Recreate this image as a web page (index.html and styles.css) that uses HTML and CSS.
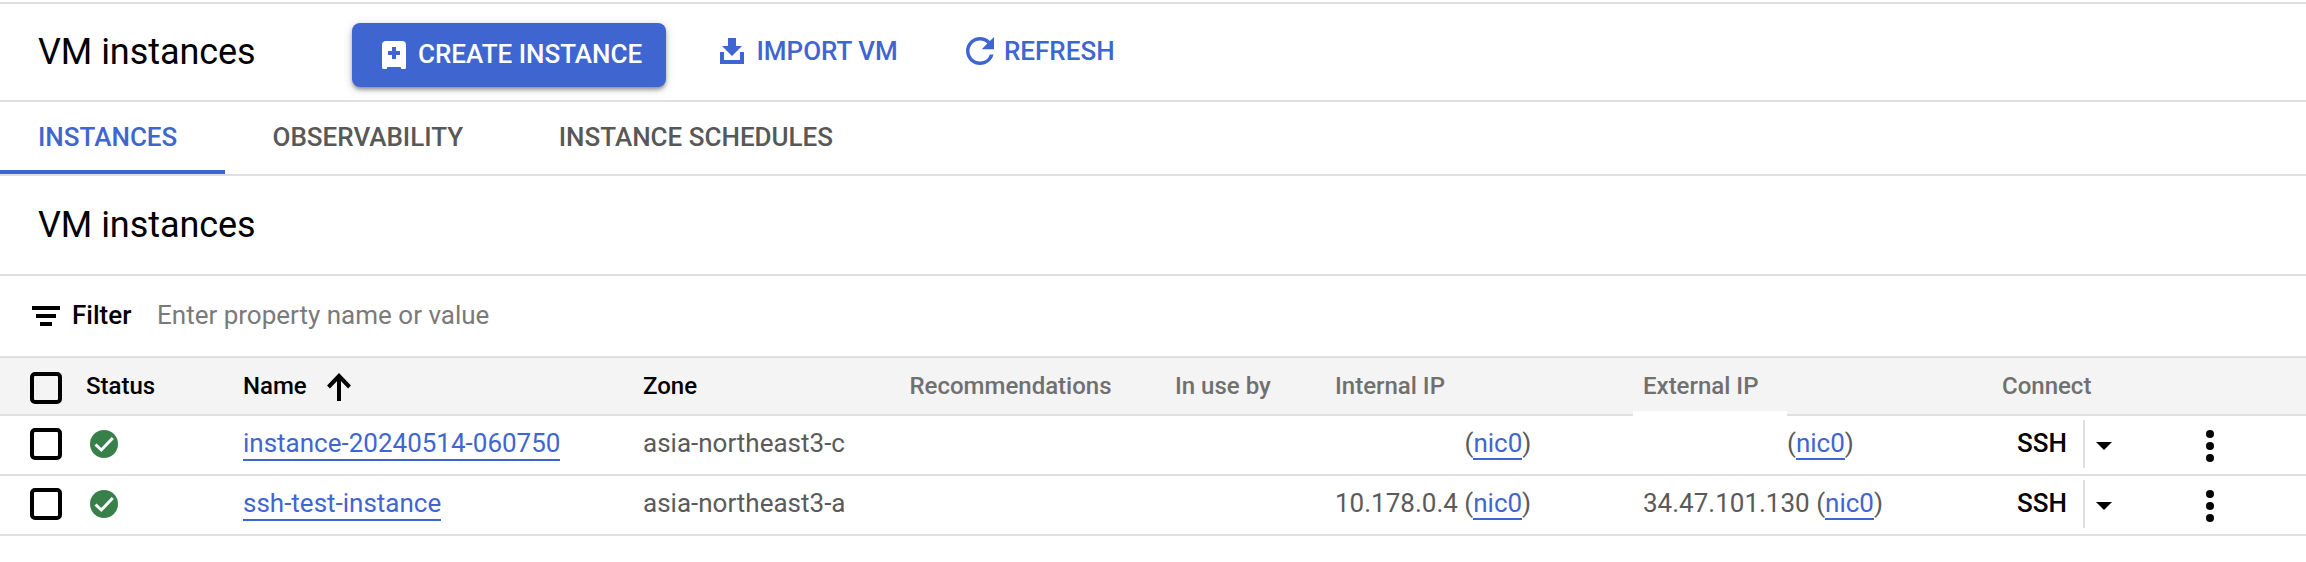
FILE: index.html
```html
<!DOCTYPE html>
<html lang="en">
<head>
<meta charset="utf-8">
<title>VM instances</title>
<link rel="stylesheet" href="styles.css">
</head>
<body>
<header class="toolbar">
  <h1 class="title">VM instances</h1>
  <button class="btn primary">
    <svg width="24" height="28" viewBox="0 0 24 28"><path fill="#fff" fill-rule="evenodd" d="M4 0h16a4 4 0 0 1 4 4v22.500a1.500 1.500 0 0 1-1.500 1.500h-2.200a1.500 1.500 0 0 1-1.500-1.500V26H5.200v.5A1.500 1.500 0 0 1 3.700 28H1.500A1.500 1.500 0 0 1 0 26.500V4a4 4 0 0 1 4-4zM10 6v4H6v4h4v4h4v-4h4v-4h-4V6z"/></svg>
    <span>CREATE INSTANCE</span>
  </button>
  <button class="btn import">
    <svg width="24" height="26" viewBox="0 0 24 26"><path fill="#3f66d0" d="M8 0h8v8h6L12 18 2 8h6zM0 14h4v8h16v-8h4v12H0z"/></svg>
    <span>IMPORT VM</span>
  </button>
  <button class="btn refresh">
    <svg width="28" height="28" viewBox="4 4 16 16"><path fill="#3f66d0" d="M17.650 6.350A7.958 7.958 0 0 0 12 4c-4.420 0-7.990 3.580-7.990 8s3.570 8 7.990 8c3.730 0 6.840-2.550 7.730-6h-2.080A5.990 5.990 0 0 1 12 18c-3.310 0-6-2.690-6-6s2.690-6 6-6c1.660 0 3.140.69 4.220 1.780L13 11h7V4z"/></svg>
    <span>REFRESH</span>
  </button>
</header>
<nav class="tabs">
  <a class="tab active"><span>INSTANCES</span></a>
  <a class="tab"><span>OBSERVABILITY</span></a>
  <a class="tab"><span>INSTANCE SCHEDULES</span></a>
</nav>
<section class="heading"><h2 class="title">VM instances</h2></section>
<section class="filter">
  <svg width="28" height="20" viewBox="0 0 28 20"><path d="M0 0h28v4H0zM4 8h20v4H4zM8 16h12v4H8z"/></svg>
  <span class="filter-label">Filter</span>
  <span class="placeholder">Enter property name or value</span>
</section>
<main class="table">
  <div class="row head">
    <div class="check"><i class="box"></i></div>
    <div class="dark">Status</div>
    <div class="dark name-head"><span>Name</span>
      <svg width="24" height="28" viewBox="0 0 24 28"><path fill="none" stroke="#000" stroke-width="4" d="M12 28V3M1.500 14 12 3l10.500 11"/></svg></div>
    <div class="dark">Zone</div>
    <div>Recommendations</div>
    <div>In use by</div>
    <div>Internal IP</div>
    <div>External IP</div>
    <div>Connect</div>
    <div></div>
  </div>
  <div class="row">
    <div class="check"><i class="box"></i></div>
    <div class="status"><svg width="28" height="28" viewBox="0 0 28 28"><circle cx="14" cy="14" r="14" fill="#37804a"/><path fill="none" stroke="#fff" stroke-width="3" d="M5.500 14.500 11.300 20 22.800 8"/></svg></div>
    <div><a class="link">instance-20240514-060750</a></div>
    <div>asia-northeast3-c</div>
    <div></div>
    <div></div>
    <div class="internal-blank">(<a class="link nic">nic0</a>)</div>
    <div class="external-blank">(<a class="link nic">nic0</a>)</div>
    <div class="connect"><b class="ssh">SSH</b><svg width="16" height="8" viewBox="0 0 16 8"><path d="M0 0h16L8 8z"/></svg></div>
    <div class="more"><svg width="8" height="32" viewBox="0 0 8 32"><circle cx="4" cy="4" r="4"/><circle cx="4" cy="16" r="4"/><circle cx="4" cy="28" r="4"/></svg></div>
  </div>
  <div class="row">
    <div class="check"><i class="box"></i></div>
    <div class="status"><svg width="28" height="28" viewBox="0 0 28 28"><circle cx="14" cy="14" r="14" fill="#37804a"/><path fill="none" stroke="#fff" stroke-width="3" d="M5.500 14.500 11.300 20 22.800 8"/></svg></div>
    <div><a class="link">ssh-test-instance</a></div>
    <div>asia-northeast3-a</div>
    <div></div>
    <div></div>
    <div>10.178.0.4 (<a class="link nic">nic0</a>)</div>
    <div>34.47.101.130 (<a class="link nic">nic0</a>)</div>
    <div class="connect"><b class="ssh">SSH</b><svg width="16" height="8" viewBox="0 0 16 8"><path d="M0 0h16L8 8z"/></svg></div>
    <div class="more"><svg width="8" height="32" viewBox="0 0 8 32"><circle cx="4" cy="4" r="4"/><circle cx="4" cy="16" r="4"/><circle cx="4" cy="28" r="4"/></svg></div>
  </div>
</main>
</body>
</html>
```
FILE: styles.css
```css
* { box-sizing: border-box; }
body { margin: 0; padding-top: 2px; background: #fff; color: #000; font: 400 26px/32px Roboto, "Noto Sans", sans-serif; height: 562px; overflow: hidden; }
svg { display: block; flex: none; }
.title { margin: 0; font-size: 36px; font-weight: 400; line-height: 44px; letter-spacing: -.05px; white-space: nowrap; }

.toolbar { height: 100px; border-top: 2px solid #e0e0e0; border-bottom: 2px solid #e0e0e0; display: flex; align-items: flex-start; padding-left: 38px; }
.toolbar .title { width: 314px; padding-top: 26px; }
.btn { border: 0; margin: 0; padding: 0; background: none; color: #3f66d0; font: 500 26px/32px Roboto, sans-serif; display: flex; align-items: center; text-align: left; white-space: nowrap; }
.btn.primary { width: 314px; height: 64px; margin-top: 19px; padding-left: 30px; gap: 12px; border-radius: 8px; background: #3f66d0; color: #fff; box-shadow: 0 3px 4px -1px rgba(0,0,0,.4), 0 2px 10px rgba(0,0,0,.2); }
.primary span { padding-bottom: 2px; }
.btn.import { margin: 31px 0 0 54px; width: 246px; gap: 12.5px; }
.btn.refresh { margin-top: 31px; gap: 10px; }

.tabs { height: 74px; border-bottom: 2px solid #e0e0e0; display: flex; }
.tab { height: 72px; padding: 19px 48px 0 47.5px; color: #585858; font-weight: 500; white-space: nowrap; }
.tab.active { width: 225px; padding-left: 38px; color: #3f66d0; border-bottom: 4px solid #3f66d0; }

.heading { height: 100px; padding: 27px 0 0 38px; border-bottom: 2px solid #e0e0e0; }
.filter { height: 82px; padding-left: 32px; border-bottom: 2px solid #e0e0e0; display: flex; align-items: center; }
.filter span { padding-bottom: 2px; }
.filter-label { width: 85px; margin-left: 12px; font-weight: 500; }
.placeholder { color: #7a7a7a; }

.row { display: grid; grid-template-columns: 86px 157px 400px 266.5px 265.5px 160px 308px 359px 204px 100px; height: 60px; border-bottom: 2px solid #e0e0e0; color: #5a5a5a; white-space: nowrap; }
.row > div { padding-top: 11px; }
.head { height: 58px; background: #f4f4f4; font-size: 24px; font-weight: 500; color: #707070; }
.head > div { padding-top: 12px; }
.head .dark { color: #000; }
.row .check { padding: 12px 0 0 30px; }
.head .check { padding-top: 14px; }
.box { display: block; width: 32px; height: 32px; border: 4px solid #000; border-radius: 5px; }
.name-head { display: flex; gap: 20px; }
.name-head svg { margin-top: 3px; }
.row .status { padding: 14px 0 0 4px; }
.link { display: inline-block; height: 34px; color: #3f66d0; border-bottom: 2px solid #3f66d0; }
.nic { height: 33px; }
.row .internal-blank { padding-left: 129.5px; }
.row .external-blank { margin: -5px 0 0 -10px; padding: 16px 0 0 154px; background: linear-gradient(#fff, #fff) 0 0 / 154px 12px no-repeat; }
.row .connect { display: flex; padding-left: 15px; }
.ssh { width: 68px; height: 48px; margin-top: -7px; padding-top: 7px; border-right: 2px solid #e0e0e0; color: #000; font-weight: 500; }
.connect svg { margin: 15px 0 0 11px; }
.row .more { padding: 14px 0 0; }
```
